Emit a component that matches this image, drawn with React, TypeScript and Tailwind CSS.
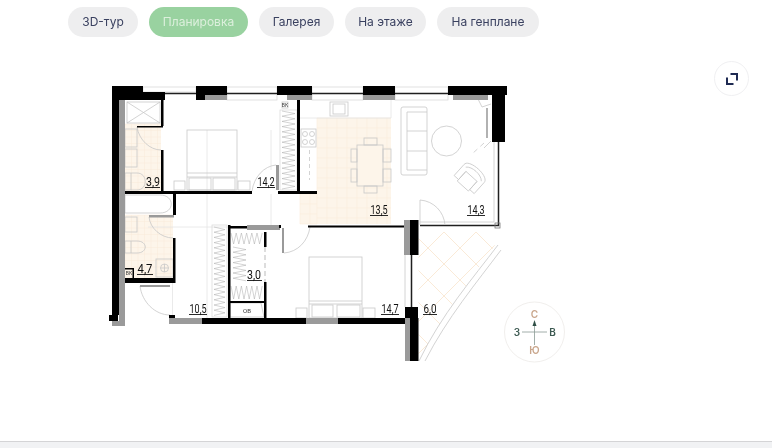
import React from 'react';

const tabs = [
  { label: '3D-тур', cls: 'w-[70px] bg-[#eeeeef] text-[#3a4160]' },
  { label: 'Планировка', cls: 'w-[99px] bg-[#99d2a0] text-[#dcefdc]' },
  { label: 'Галерея', cls: 'w-[75px] bg-[#eeeeef] text-[#3a4160]' },
  { label: 'На этаже', cls: 'w-[81px] bg-[#eeeeef] text-[#3a4160]' },
  { label: 'На генплане', cls: 'w-[102px] bg-[#eeeeef] text-[#3a4160]' },
];

const walls = [
  // left and top outline
  [112, 86, 7, 229], [109, 315, 9, 6], [112, 86, 31, 9], [119, 95, 46, 5], [143, 92, 22, 3], [196, 86, 31, 9], [196, 95, 9, 5],
  [277, 86, 35, 9], [363, 86, 32, 9], [448, 86, 59, 9], [492, 95, 13, 47],
  // bath + bedroom walls
  [161, 100, 2.5, 26], [137, 126, 26, 1.5], [161, 150, 2.5, 42], [125, 191, 127, 3], [278, 191, 39, 3],
  [297, 100, 3, 92], [173, 194, 3, 21], [173, 238, 2.5, 45], [125, 278, 50, 5], [125, 268, 9, 1.5], [132.5, 268, 1.5, 10],
  [169, 315, 6, 3],
  // closet
  [228, 225, 2.5, 93], [228, 226, 19, 2.5], [264, 232, 2.5, 15], [264, 282, 2.5, 36], [230, 301, 35, 2], [279, 225, 2, 3],
  // centre + balcony
  [308, 225.5, 96, 2], [410, 220, 8.5, 35], [405, 307, 13, 11], [410, 318, 8.5, 43],
  [202, 318, 104, 6], [338, 318, 67, 6],
];

const greys = [
  [119, 95, 6, 231], [112, 321, 13, 5], [205, 95, 22, 5], [287, 95, 25, 5], [363, 95, 32, 5], [453, 95, 35, 5],
  [149, 215, 25, 2.5], [276, 165, 3, 25], [169, 318, 33, 6], [247, 225, 33, 5], [282, 228, 2, 25],
  [404, 220, 6, 35], [405, 318, 5, 43], [306, 318, 32, 6], [140, 285, 30, 2],
];

const outlines = [
  // shower, sinks, toilets
  [127, 102, 33, 21], [125, 129, 12, 18], [125, 149, 12, 18], [125, 217, 12, 15], [156, 259, 17, 18],
  // bedroom 1
  [187, 130, 50, 60], [189, 178, 22, 12], [213, 178, 22, 12], [174, 181, 11, 9], [238, 181, 12, 9], [282, 102, 6, 6],
  // kitchen
  [330, 102, 18, 14], [301, 129, 15, 18], [357, 145, 26, 41], [351, 149, 6, 13], [351, 169, 6, 13], [383, 149, 8, 13],
  [383, 169, 8, 13], [364, 138, 13, 7], [364, 186, 13, 7],
  // bedroom 2
  [309, 257, 53, 61], [312, 305, 21, 12], [337, 305, 23, 12], [296, 308, 11, 10], [363, 308, 12, 10],
];

const labels: [string, number, number, number, number][] = [
  ['3,9', 153, 186, 145, 160], ['14,2', 266, 186, 257, 275], ['13,5', 379, 214, 370, 388], ['14,3', 476, 214, 467, 485],
  ['4,7', 145, 273, 137, 153], ['3,0', 254, 279, 247, 262], ['10,5', 198, 313, 189, 207], ['14,7', 390, 313, 381, 399],
  ['6,0', 430, 313, 423, 437],
];

const zigV = (x1: number, x2: number, y1: number, y2: number) => {
  const pts: string[] = [];
  for (let y = y1, i = 0; y <= y2; y += 2.6, i++) pts.push(`${i % 2 ? x2 : x1},${y}`);
  return pts.join(' ');
};

const zigH = (x1: number, x2: number, y1: number, y2: number) => {
  const pts: string[] = [];
  for (let x = x1, i = 0; x <= x2; x += 2.6, i++) pts.push(`${x},${i % 2 ? y2 : y1}`);
  return pts.join(' ');
};

const gridLines = (x1: number, y1: number, x2: number, y2: number, step: number) => {
  let d = '';
  for (let x = x1; x <= x2; x += step) d += `M${x} ${y1}V${y2}`;
  for (let y = y1; y <= y2; y += step) d += `M${x1} ${y}H${x2}`;
  return d;
};

const balconyShape = 'M418.5 232H495V245C473 278 441 315 419 361H418.5Z';

let balconyTiles = '';
for (let c = 188; c < 700; c += 32) {
  balconyTiles += `M${c} 232L${c + 140} 372M${c} 232L${c - 140} 372`;
}

const FloorPlan = () => (
  <svg width="470" height="285" viewBox="100 80 470 285" className="ml-[100px] mt-[43px] block">
    <defs>
      <clipPath id="balcony-clip"><path d={balconyShape} /></clipPath>
    </defs>

    {/* tiled floors */}
    <rect x="125" y="124" width="36" height="67" fill="#fdf5ea" />
    <rect x="125" y="215" width="48" height="63" fill="#fdf5ea" />
    <path d="M317 118H391V224H300V194H317Z" fill="#fdf5ea" />
    <path d={gridLines(125, 124, 161, 191, 6.5)} stroke="#f9ebdb" strokeWidth="0.5" fill="none" />
    <path d={gridLines(125, 215, 173, 278, 6.5)} stroke="#f9ebdb" strokeWidth="0.5" fill="none" />
    <path d={gridLines(317, 118, 391, 224, 10)} stroke="#fbeddc" strokeWidth="0.6" fill="none" />
    <path d={gridLines(300, 194, 317, 224, 10)} stroke="#fbeddc" strokeWidth="0.6" fill="none" />
    <path d={balconyTiles} clipPath="url(#balcony-clip)" stroke="#f9e8d3" strokeWidth="0.9" fill="none" />

    {/* windows */}
    <g stroke="#d5d5d5" fill="#fff" strokeWidth="0.7">
      <rect x="143" y="87" width="53" height="5" />
      <rect x="227" y="87" width="50" height="13" />
      <rect x="312" y="87" width="51" height="13" />
      <rect x="395" y="87" width="53" height="13" />
    </g>
    <g stroke="#1f1f1f" strokeWidth="1.5" fill="none">
      <path d="M165 93.5H196M227 93.5H277M312 93.5H363M395 93.5H448" />
      <path d="M498.5 142V225.5H420M411.5 255V307" />
    </g>
    <path d="M494 142V222H420M405 255V307" stroke="#c9c9c9" strokeWidth="0.8" fill="none" />
    <rect x="495" y="223" width="5" height="5" fill="none" stroke="#777" strokeWidth="0.8" />

    {/* grey dimension lines */}
    <path d="M207 130V318M271 130V170M271 194V225M148 227H228M300 118H391M391 100V118M172.5 283V315" stroke="#e4e4e4" strokeWidth="0.8" fill="none" />

    {/* fixtures */}
    <g fill="none" stroke="#c8c8c8" strokeWidth="0.8">
      {outlines.map(([x, y, w, h]) => <rect key={`${x}-${y}`} x={x} y={y} width={w} height={h} fill={x === 357 ? '#fdf5ea' : 'none'} />)}
      <path d="M127 102L160 123M160 102L127 123" />
      <path d="M187 173H237M187 177H237M309 301H362M309 304H362" />
      <path d="M125 173H137C148 173 148 190 137 190H125ZM131 173V190" />
      <path d="M125 241H137C148 241 148 253 137 253H125ZM131 241V253" />
      <path d="M125 195H160C175 195 175 213 160 213H125Z" />
      <circle cx="164.5" cy="268" r="4" />
      <path d="M160.5 268H168.5M164.5 264V272" />
      <circle cx="305" cy="134" r="2.5" /><circle cx="312" cy="134" r="2.5" /><circle cx="305" cy="142" r="2.5" /><circle cx="312" cy="142" r="2.5" />
      <rect x="333" y="104" width="12" height="10" />
      <path d="M309.5 150V180" strokeDasharray="4 3" />
      {/* sofa */}
      <rect x="401" y="107" width="26" height="68" rx="2" />
      <path d="M407 112V170M407 112H427M407 131H427M407 151H427M407 170H427" />
      <circle cx="446.5" cy="141" r="15" />
      {/* armchair */}
      <g transform="rotate(42 470.5 177.5)">
        <path d="M457 172C457 164 484 164 484 172V187H478V176H463V187H457Z" />
        <path d="M460 173C464 168 477 168 481 173" />
        <path d="M463 176V189H478V176" />
      </g>
      {/* tv + slanted wall */}
      <path d="M477 97L482 107L491 104M491 141L484 148" />
      <path d="M487 108V138" stroke="#888" strokeWidth="1.3" />
      <path d="M484 143L472 154" strokeDasharray="5 4" />
      {/* doors */}
      <path d="M137 127C139 140 150 150 161 150" />
      <path d="M149 217C150 228 161 238 173 238" />
      <path d="M140 286C142 302 155 315 170 315" />
      <path d="M276 165C264 166 254 177 252 191" />
      <path d="M284 253C298 252 308 241 310 227" />
      <path d="M420 200V225M420 200C434 201 444 212 445 225" />
      {/* balcony rail */}
      <path d="M419 361C441 315 473 278 498 245" />
      <path d="M425 361C447 318 477 282 501 250" />
      {/* closet and wardrobes */}
      <rect x="212" y="225" width="15" height="92" stroke="#dcdcdc" />
      <rect x="280" y="110" width="17" height="80" stroke="#dcdcdc" />
      <path d="M230 303H261L264 317H230Z" />
      <path d="M265 247V282" strokeDasharray="5 3" stroke="#aaa" />
    </g>
    <g fill="none" stroke="#a8a8a8" strokeWidth="0.5">
      <polyline points={zigV(282, 295, 111, 189)} />
      <polyline points={zigV(214, 225, 227, 316)} />
      <polyline points={zigV(233, 246, 247, 283)} />
      <polyline points={zigH(231, 264, 233, 244)} />
      <polyline points={zigH(231, 264, 286, 299)} />
    </g>

    {/* walls */}
    {greys.map(([x, y, w, h]) => <rect key={`g${x}-${y}`} x={x} y={y} width={w} height={h} fill="#9a9a9a" />)}
    {walls.map(([x, y, w, h]) => <rect key={`w${x}-${y}`} x={x} y={y} width={w} height={h} fill="#000" />)}
    <text x="129" y="275" fontSize="5" textAnchor="middle" fill="#333" fontFamily="Roboto, sans-serif">ВК</text>
    <text x="285" y="107" fontSize="5" textAnchor="middle" fill="#333" fontFamily="Roboto, sans-serif">ВК</text>
    <text x="247" y="313" fontSize="6" textAnchor="middle" fill="#333" fontFamily="Roboto, sans-serif">ОВ</text>

    {/* room areas */}
    {labels.map(([t, x, y, x1, x2]) => (
      <g key={t}>
        <text x={x} y={y} fontSize="12" textAnchor="middle" textLength={x2 - x1 - 1} lengthAdjust="spacingAndGlyphs" fill="#111" fontFamily="Roboto, sans-serif">{t}</text>
        <path d={`M${x1} ${y + 1.5}H${x2}`} stroke="#111" strokeWidth="0.9" />
      </g>
    ))}

    {/* compass */}
    <circle cx="534.5" cy="332" r="30" fill="#fff" stroke="#f1efed" />
    <path d="M522 332H547M534.5 324V345" stroke="#8a9a94" strokeWidth="0.8" />
    <path d="M534.5 320L536.5 326H532.5Z" fill="#2f4f46" />
    <g fontSize="10" textAnchor="middle" fontWeight="600" fontFamily="Inter, sans-serif">
      <text x="534.5" y="317.5" fill="#c9a68c">С</text>
      <text x="534.5" y="353.5" fill="#c9a68c">Ю</text>
      <text x="517" y="335.5" fill="#3d5a52">З</text>
      <text x="552.5" y="335.5" fill="#3d5a52">В</text>
    </g>
  </svg>
);

const App = () => {
  return (
    <div className="relative flex h-[448px] w-[772px] flex-col overflow-hidden bg-white font-['Inter',sans-serif] blur-[0.3px]">
      <div className="flex gap-[11px] pl-[68px] pt-[7px]">
        {tabs.map((tab) => (
          <div key={tab.label} className={`flex h-[30px] items-center justify-center rounded-full text-[12px] ${tab.cls}`}>
            {tab.label}
          </div>
        ))}
      </div>

      <div className="flex-1">
        <FloorPlan />
      </div>

      <button className="absolute left-[714px] top-[61px] flex h-[35px] w-[35px] items-center justify-center rounded-full border border-[#f0f0f2] bg-white">
        <svg width="14" height="14" viewBox="0 0 14 14" fill="none" stroke="#1e2a52" strokeWidth="2">
          <path d="M5.5 2H12V8.5" />
          <path d="M8.5 12H2V5.5" />
        </svg>
      </button>

      <div className="h-[7px] border-t border-[#d4d4d6] bg-[#f1f2f4]" />
    </div>
  );
};

export default App;
